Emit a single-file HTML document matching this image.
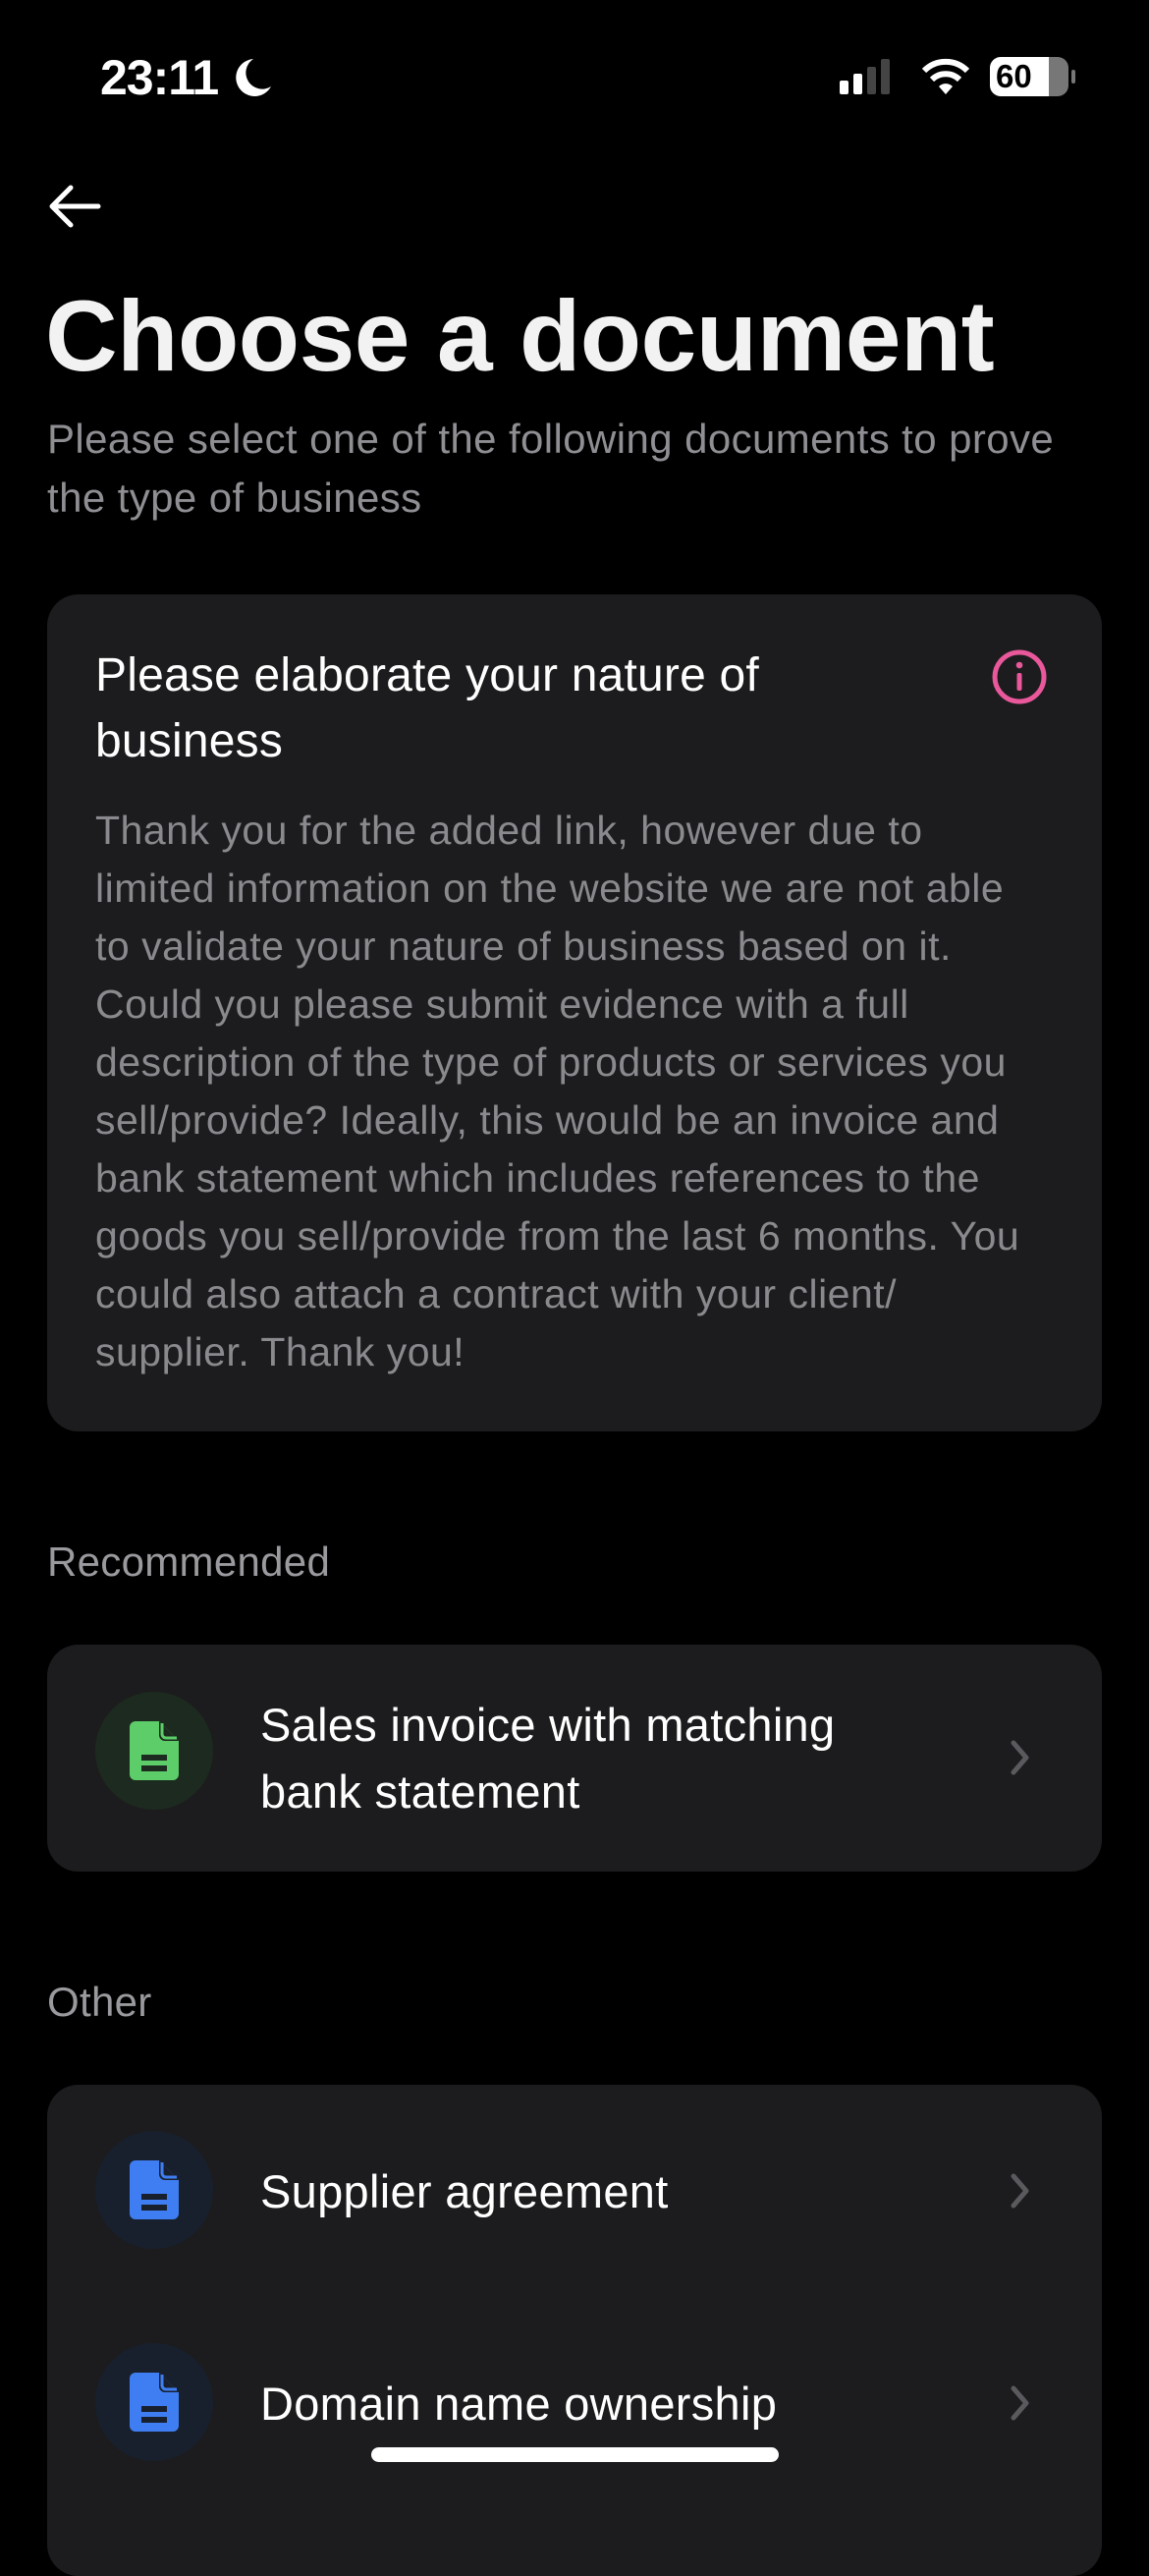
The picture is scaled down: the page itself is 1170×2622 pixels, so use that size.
<!DOCTYPE html>
<html><head><meta charset="utf-8"><style>
*{margin:0;padding:0;box-sizing:border-box}
body{width:1170px;height:2532px;background:#000;position:relative;overflow:hidden;font-family:"Liberation Sans",sans-serif;color:#fff}
.a{position:absolute;white-space:nowrap}
.card{position:absolute;left:48px;width:1074px;background:#1c1c1e;border-radius:32px}
.sub{font-size:42px;color:#8e8e93;line-height:60px;letter-spacing:0.4px}
.body{font-size:41px;color:#8a8a8e;line-height:59px;letter-spacing:0.5px}
.item{font-size:47px;line-height:68px;color:#fff;letter-spacing:0.3px}
.ic{position:absolute;width:120px;height:120px;border-radius:60px;left:97px}
.ic svg{position:absolute;left:35px;top:30px}
.chev{position:absolute;left:1028px}
</style></head><body>
<div class="a" style="left:102px;top:50px;font-size:50px;font-weight:bold;letter-spacing:-1px">23:11</div>
<svg class="a" style="left:238px;top:58px" width="40" height="42" viewBox="0 0 40 42"><path d="M20 2 A19 19 0 1 0 38 30 A16 16 0 0 1 20 2Z" fill="#fff"/></svg>
<svg class="a" style="left:855px;top:60px" width="60" height="36"><rect x="0" y="22" width="9" height="14" rx="2" fill="#fff"/><rect x="14" y="15" width="9" height="21" rx="2" fill="#fff"/><rect x="28" y="8" width="9" height="28" rx="2" fill="#444"/><rect x="42" y="0" width="9" height="36" rx="2" fill="#444"/></svg>
<svg class="a" style="left:938px;top:58px" width="50" height="40" viewBox="0 0 50 40"><path d="M25 38 L32 30 A10 10 0 0 0 18 30Z" fill="#fff"/><path d="M11 23 A20 20 0 0 1 39 23" stroke="#fff" stroke-width="6" fill="none"/><path d="M3 14 A31 31 0 0 1 47 14" stroke="#fff" stroke-width="6" fill="none"/></svg>
<div class="a" style="left:1008px;top:58px;width:80px;height:40px;border-radius:11px;background:linear-gradient(90deg,#fff 75%,#777 75%);color:#000;font-weight:bold;font-size:33px;line-height:40px;padding-left:6px">60</div>
<div class="a" style="left:1091px;top:71px;width:4px;height:14px;background:#777;border-radius:2px"></div>
<svg class="a" style="left:48px;top:187px" width="56" height="46" viewBox="0 0 56 46"><path d="M52 23 H5 M24 4 L5 23 L24 42" stroke="#fff" stroke-width="5" fill="none" stroke-linecap="round" stroke-linejoin="round"/></svg>
<div class="a" style="left:46px;top:284px;font-size:102px;font-weight:bold;color:#f2f2f2;letter-spacing:-0.5px">Choose a document</div>
<div class="a sub" style="left:48px;top:417px">Please select one of the following documents to prove<br>the type of business</div>
<div class="card" style="top:605px;height:852px"></div>
<div class="a" style="left:97px;top:654px;font-size:48px;line-height:67px;letter-spacing:0.2px">Please elaborate your nature of<br>business</div>
<svg class="a" style="left:1009px;top:660px" width="58" height="58" viewBox="0 0 58 58"><circle cx="29" cy="29" r="25" stroke="#e8589a" stroke-width="5" fill="none"/><rect x="26.5" y="25" width="5" height="18" rx="2" fill="#e8589a"/><circle cx="29" cy="17" r="3.3" fill="#e8589a"/></svg>
<div class="a body" style="left:97px;top:816px">Thank you for the added link, however due to<br>limited information on the website we are not able<br>to validate your nature of business based on it.<br>Could you please submit evidence with a full<br>description of the type of products or services you<br>sell/provide? Ideally, this would be an invoice and<br>bank statement which includes references to the<br>goods you sell/provide from the last 6 months. You<br>could also attach a contract with your client/<br>supplier. Thank you!</div>
<div class="a" style="left:48px;top:1566px;font-size:42px;color:#9a9a9e;letter-spacing:0.3px">Recommended</div>
<div class="card" style="top:1674px;height:231px"></div>
<div class="ic" style="top:1722px;background:#1d2a1f"><svg width="50" height="60" viewBox="0 0 50 60"><path d="M6 0 H30 L50 20 V54 A6 6 0 0 1 44 60 H6 A6 6 0 0 1 0 54 V6 A6 6 0 0 1 6 0Z" fill="#5ccd69"/><path d="M30 0 V14 A6 6 0 0 0 36 20 H50" fill="#1d2a1f"/><path d="M33 2 V13 A4 4 0 0 0 37 17 H48" fill="none" stroke="#5ccd69" stroke-width="3"/><rect x="12" y="34" width="26" height="6" fill="#1d2a1f"/><rect x="12" y="45" width="26" height="6" fill="#1d2a1f"/></svg></div>
<div class="a item" style="left:265px;top:1722px">Sales invoice with matching<br>bank statement</div>
<svg class="chev" style="top:1770px" width="22" height="38" viewBox="0 0 22 38"><path d="M4 4 L17 19 L4 34" stroke="#5a5a5e" stroke-width="5" fill="none" stroke-linecap="round" stroke-linejoin="round"/></svg>
<div class="a" style="left:48px;top:2014px;font-size:42px;color:#9a9a9e;letter-spacing:0.3px">Other</div>
<div class="card" style="top:2122px;height:500px"></div>
<div class="ic" style="top:2169px;background:#18202e"><svg width="50" height="60" viewBox="0 0 50 60"><path d="M6 0 H30 L50 20 V54 A6 6 0 0 1 44 60 H6 A6 6 0 0 1 0 54 V6 A6 6 0 0 1 6 0Z" fill="#3f7ef2"/><path d="M30 0 V14 A6 6 0 0 0 36 20 H50" fill="#18202e"/><path d="M33 2 V13 A4 4 0 0 0 37 17 H48" fill="none" stroke="#3f7ef2" stroke-width="3"/><rect x="12" y="34" width="26" height="6" fill="#18202e"/><rect x="12" y="45" width="26" height="6" fill="#18202e"/></svg></div>
<div class="a item" style="left:265px;top:2197px">Supplier agreement</div>
<svg class="chev" style="top:2211px" width="22" height="38" viewBox="0 0 22 38"><path d="M4 4 L17 19 L4 34" stroke="#5a5a5e" stroke-width="5" fill="none" stroke-linecap="round" stroke-linejoin="round"/></svg>
<div class="ic" style="top:2385px;background:#18202e"><svg width="50" height="60" viewBox="0 0 50 60"><path d="M6 0 H30 L50 20 V54 A6 6 0 0 1 44 60 H6 A6 6 0 0 1 0 54 V6 A6 6 0 0 1 6 0Z" fill="#3f7ef2"/><path d="M30 0 V14 A6 6 0 0 0 36 20 H50" fill="#18202e"/><path d="M33 2 V13 A4 4 0 0 0 37 17 H48" fill="none" stroke="#3f7ef2" stroke-width="3"/><rect x="12" y="34" width="26" height="6" fill="#18202e"/><rect x="12" y="45" width="26" height="6" fill="#18202e"/></svg></div>
<div class="a item" style="left:265px;top:2413px">Domain name ownership</div>
<svg class="chev" style="top:2427px" width="22" height="38" viewBox="0 0 22 38"><path d="M4 4 L17 19 L4 34" stroke="#5a5a5e" stroke-width="5" fill="none" stroke-linecap="round" stroke-linejoin="round"/></svg>
<div class="a" style="left:378px;top:2491px;width:415px;height:15px;border-radius:8px;background:#fff"></div>
</body></html>
